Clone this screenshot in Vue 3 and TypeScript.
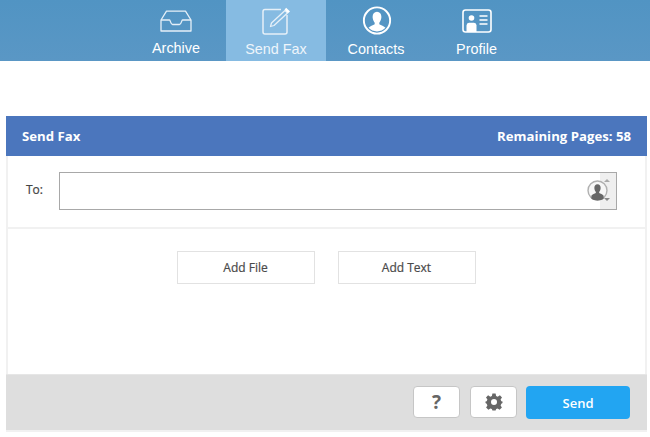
<script setup lang="ts">
const navItems = ['Archive', 'Send Fax', 'Contacts', 'Profile']
</script>

<template>
  <div class="page">
    <nav class="nav">
      <a v-for="item in navItems" :key="item" class="nav-item" :class="{ active: item === 'Send Fax' }">
        <svg v-if="item === 'Archive'" class="nav-icon icon-archive" width="32" height="22" viewBox="0 0 32 22" fill="none" stroke="#e6f0f8" stroke-width="1.3">
          <path d="M1 10 L6.5 1.2 H25.5 L31 10 V21 H1 Z" stroke-linejoin="round" />
          <path d="M1 10 H9.5 C10.5 10 10.5 14.5 12.5 14.5 H19.5 C21.5 14.5 21.5 10 22.5 10 H31" stroke-linejoin="round" />
        </svg>
        <svg v-else-if="item === 'Send Fax'" class="nav-icon icon-send" width="30" height="28" viewBox="0 0 30 28" fill="none" stroke="#e6f0f8" stroke-width="1.5">
          <path d="M19 2.5 H3 Q1 2.5 1 4.5 V25 Q1 27 3 27 H23 Q25 27 25 25 V8" />
          <path d="M8.5 19.5 L9.5 16 L23 3.5 L25.5 6 L12 18.5 Z" stroke-width="1.3" stroke-linejoin="round" />
          <path d="M24.2 0.8 L28 4.4 L26 6.2 L22.6 2.6 Z" fill="#fff" stroke="none" />
        </svg>
        <svg v-else-if="item === 'Contacts'" class="nav-icon icon-contacts" width="29" height="29" viewBox="0 0 30 30">
          <circle cx="15" cy="15" r="13.6" fill="none" stroke="#fff" stroke-width="2" />
          <path d="M15 6 C11.8 6 10.2 8.6 10.5 12 C10.7 14.5 11.7 16.2 12.6 17.2 V18.8 C11 20 7.6 20.6 6.2 22.6 A12.4 12.4 0 0 0 23.8 22.6 C22.4 20.6 19 20 17.4 18.8 V17.2 C18.3 16.2 19.3 14.5 19.5 12 C19.8 8.6 18.2 6 15 6 Z" fill="#fff" />
        </svg>
        <svg v-else class="nav-icon icon-profile" width="30" height="24" viewBox="0 0 30 24" fill="none">
          <rect x="1" y="1" width="28" height="22" rx="2.5" stroke="#fff" stroke-width="1.6" />
          <circle cx="9.5" cy="9" r="2.8" fill="#fff" />
          <path d="M4.5 23 V16.5 Q4.5 14 7 13.8 H12 Q14.5 14 14.5 16.5 V23 Z" fill="#fff" />
          <path d="M17.5 7 H25.5 M17.5 11 H25.5 M17.5 15 H25.5" stroke="#fff" stroke-width="1.4" />
        </svg>
        <span class="nav-label">{{ item }}</span>
      </a>
    </nav>

    <section class="card">
      <header class="card-head">
        <span>Send Fax</span>
        <span>Remaining Pages: 58</span>
      </header>

      <div class="to-row">
        <label class="to-label">To:</label>
        <div class="to-input">
          <div class="spinner">
            <svg class="contact-icon" width="21" height="23" viewBox="0 0 30 33">
              <circle cx="15" cy="15" r="13.6" fill="#f6f6f6" stroke="#b0b0b0" stroke-width="2" />
              <path d="M15 6 C11.8 6 10.2 8.6 10.5 12 C10.7 14.5 11.7 16.2 12.6 17.2 V18.8 C11 20 7.6 20.6 6.2 22.6 V27 C10 30 20 30 23.8 27 V22.6 C22.4 20.6 19 20 17.4 18.8 V17.2 C18.3 16.2 19.3 14.5 19.5 12 C19.8 8.6 18.2 6 15 6 Z" fill="#666" />
            </svg>
            <i class="arrow up"></i>
            <i class="arrow down"></i>
          </div>
        </div>
      </div>

      <div class="add-row">
        <button class="add-btn">Add File</button>
        <button class="add-btn">Add Text</button>
      </div>

      <footer class="card-foot">
        <button class="icon-btn question">?</button>
        <button class="icon-btn">
          <svg width="18" height="18" viewBox="0 0 18 18">
            <path fill="#666" fill-rule="evenodd" d="M7.4 0.5 H10.6 L11.1 3 L12.7 3.7 L14.9 2.3 L17 4.4 L15.6 6.6 L16.3 8.2 L17.5 8.5 V10 L16.3 10.8 L15.6 12.4 L16.9 14.4 L14.6 16.7 L12.6 15.4 L11.1 16 L10.6 17.5 H7.4 L6.9 16 L5.4 15.4 L3.4 16.7 L1.1 14.4 L2.4 12.4 L1.7 10.8 L0.5 10 V8.5 L1.7 8.2 L2.4 6.6 L1 4.4 L3.1 2.3 L5.3 3.7 L6.9 3 Z M9 6 A3 3 0 1 0 9 12 A3 3 0 1 0 9 6 Z" />
          </svg>
        </button>
        <button class="send-btn">Send</button>
      </footer>
    </section>
  </div>
</template>

<style scoped>
.page {
  width: 650px;
  height: 437px;
  overflow: hidden;
  background: #fff;
  font-family: "Open Sans", "Liberation Sans", sans-serif;
}
.nav {
  height: 61px;
  display: flex;
  justify-content: center;
  background: linear-gradient(#5194c3, #5a97c5);
  padding-left: 2px;
  box-sizing: border-box;
}
.nav-item {
  width: 100px;
  height: 61px;
  display: flex;
  flex-direction: column;
  align-items: center;
  color: #fff;
  position: relative;
}
.nav-item.active {
  background: #86bbe2;
}
.nav-icon {
  position: absolute;
  left: 50%;
  bottom: 26px;
  transform: translateX(-50%);
}
.icon-archive {
  bottom: 29px;
}
.icon-send {
  margin-left: 1px;
}
.icon-contacts {
  margin-left: 1px;
}
.icon-profile {
  bottom: 28px;
  margin-left: 1px;
}
.nav-label {
  position: absolute;
  top: 41px;
  font: 14.4px/17px "Liberation Sans", Arial, sans-serif;
  white-space: nowrap;
}
.nav-item:first-child .nav-label {
  top: 40px;
}
.nav-item:last-child .nav-label {
  margin-left: 1px;
}
.active .nav-label {
  color: #eef5fb;
}
.card {
  margin: 55px 0 0 6px;
  width: 641px;
  height: 316px;
  box-sizing: border-box;
  border: solid #f1f1f1;
  border-width: 0 2px 2px;
  display: flex;
  flex-direction: column;
}
.card-head {
  margin: 0 -2px;
  height: 40px;
  flex: none;
  background: #4b76bd;
  color: #fff;
  display: flex;
  justify-content: space-between;
  align-items: center;
  padding: 0 16px;
  font-size: 13.2px;
  font-weight: 700;
}
.to-row {
  height: 73px;
  flex: none;
  box-sizing: border-box;
  border-bottom: 2px solid #f1f1f1;
  padding: 16px 0 0 18px;
  display: flex;
  align-items: flex-start;
  color: #444;
  font-size: 12px;
}
.to-label {
  width: 33px;
  line-height: 36px;
  -webkit-text-stroke: 0.2px #444;
}
.to-input {
  width: 558px;
  height: 38px;
  box-sizing: border-box;
  border: 1px solid #a8a8a8;
  background: #fff;
  display: flex;
  justify-content: flex-end;
}
.spinner {
  width: 16px;
  height: 36px;
  background: #efefef;
  position: relative;
}
.contact-icon {
  position: absolute;
  right: 8px;
  top: 7px;
}
.arrow {
  position: absolute;
  left: 4px;
  width: 0;
  height: 0;
  border: 3px solid transparent;
}
.arrow.up {
  top: 6px;
  border-bottom: 3px solid #aaa;
  border-top: 0;
}
.arrow.down {
  bottom: 8px;
  border-top: 3px solid #888;
  border-bottom: 0;
}
.add-row {
  display: flex;
  justify-content: center;
  gap: 23px;
  padding-top: 22px;
  padding-right: 1px;
  flex: 1;
  align-items: flex-start;
}
.add-btn {
  width: 138px;
  height: 33px;
  box-sizing: border-box;
  background: #fff;
  border: 1px solid #e2e2e2;
  color: #4a4a4a;
  font: 500 12px "Open Sans", sans-serif;
  -webkit-text-stroke: 0.2px #4a4a4a;
  padding: 0;
}
.card-foot {
  margin: 0 -2px;
  height: 56px;
  flex: none;
  box-sizing: border-box;
  background: #dedede;
  border-top: 1px solid #e6e6e6;
  display: flex;
  justify-content: flex-end;
  align-items: flex-start;
  gap: 10px;
  padding: 11px 17px 0 0;
}
.icon-btn {
  width: 47px;
  height: 32px;
  box-sizing: border-box;
  background: #fff;
  border: 1px solid #c6c6c6;
  border-radius: 4px;
  display: flex;
  align-items: center;
  justify-content: center;
  padding: 0;
}
.question {
  color: #666;
  font: 700 19px "Open Sans", sans-serif;
}
.send-btn {
  width: 104px;
  height: 33px;
  margin-left: -1px;
  background: #22a5f2;
  border: none;
  border-radius: 4px;
  color: #fff;
  font: 600 13px "Open Sans", sans-serif;
  padding: 0;
}
</style>
